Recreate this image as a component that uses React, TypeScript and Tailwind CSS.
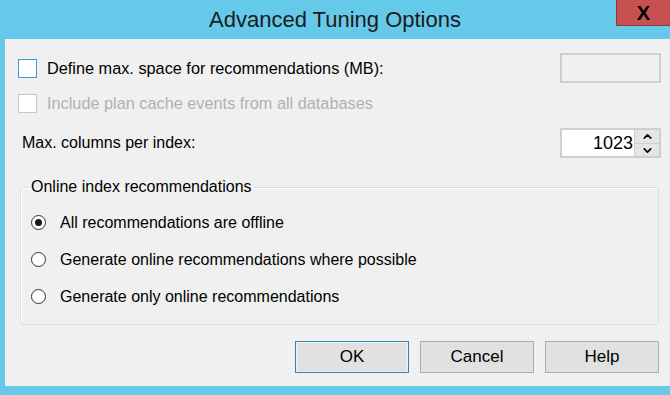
import { ChevronUp, ChevronDown } from "lucide-react";

const font = { fontFamily: '"Liberation Sans", Arial, sans-serif' };

function Checkbox({ focused, disabled }: { focused?: boolean; disabled?: boolean }) {
  return (
    <span
      className={`inline-block w-[19px] h-[19px] bg-white border ${
        focused ? "border-[#3c9ad7]" : disabled ? "border-[#c6c6c6]" : "border-[#333]"
      }`}
    />
  );
}

function Radio({ checked }: { checked?: boolean }) {
  return (
    <span className="flex items-center justify-center w-[15px] h-[15px] rounded-full border border-[#333] bg-white">
      {checked && <span className="block w-[7px] h-[7px] rounded-full bg-[#1a1a1a]" />}
    </span>
  );
}

export default function App() {
  return (
    <div className="w-[670px] h-[395px] bg-[#65c9ea] flex flex-col overflow-hidden text-[16px] text-black" style={font}>
      {/* title bar */}
      <div className="relative h-[39px] flex items-center justify-center">
        <span className="text-[22px] text-[#1b1b1b]">Advanced Tuning Options</span>
        <div className="absolute right-0 top-0 w-[54px] h-[26px] bg-[#c75050] border-l border-b border-[#8f3a3a] flex items-center justify-center">
          <span className="text-[20px] font-bold leading-none text-black">X</span>
        </div>
      </div>

      {/* client area */}
      <div className="ml-[5px] flex-1 bg-[#f0f0f0] flex flex-col pl-[13px] pr-[9px] pt-[14px]">
        <div className="h-[30px] flex items-center justify-between">
          <label className="flex items-center gap-[10px]">
            <Checkbox focused />
            <span className="text-[16.3px]">Define max. space for recommendations (MB):</span>
          </label>
          <div className="w-[101px] h-[30px] border-2 border-[#cfcfcf] bg-[#f0f0f0]" />
        </div>

        <div className="h-[30px] mt-[5px] flex items-center">
          <label className="flex items-center gap-[10px] text-[#b0b0b0]">
            <Checkbox disabled />
            <span className="text-[16.3px]">Include plan cache events from all databases</span>
          </label>
        </div>

        <div className="h-[30px] mt-[10px] flex items-center justify-between">
          <span className="pl-[4px]">Max. columns per index:</span>
          <div className="w-[101px] h-[30px] border-2 border-[#cfcfcf] bg-white flex">
            <span className="flex-1 text-right pr-[1px] leading-[26px] text-[18px]">1023</span>
            <div className="w-[25px] flex flex-col bg-[#e5e5e5] border-l border-[#cfcfcf]">
              <div className="flex-1 flex items-center justify-center border-b border-[#cfcfcf]">
                <ChevronUp size={13} strokeWidth={3} />
              </div>
              <div className="flex-1 flex items-center justify-center">
                <ChevronDown size={13} strokeWidth={3} />
              </div>
            </div>
          </div>
        </div>

        <fieldset className="mt-[21px] ml-[2px] mr-[2px] h-[146px] border border-[#d5dfe5] rounded-[3px] pl-[10px] pt-[9px] shadow-[inset_1px_1px_0_#fff]">
          <legend className="px-[2px] ml-[-2px] text-[16px] leading-[16px]">Online index recommendations</legend>
          <div className="flex flex-col">
            <label className="flex items-center gap-[14px] h-[37px]">
              <Radio checked />
              <span>All recommendations are offline</span>
            </label>
            <label className="flex items-center gap-[14px] h-[37px]">
              <Radio />
              <span>Generate online recommendations where possible</span>
            </label>
            <label className="flex items-center gap-[14px] h-[37px]">
              <Radio />
              <span>Generate only online recommendations</span>
            </label>
          </div>
        </fieldset>

        <div className="mt-[16px] mr-[2px] flex justify-end gap-[11px]">
          <button className="w-[114px] h-[32px] bg-[#e1e1e1] border border-[#3c7fb1] shadow-[inset_0_0_0_1px_#e5f1fb] text-[17px]">OK</button>
          <button className="w-[114px] h-[32px] bg-[#e1e1e1] border border-[#adadad] text-[17px]">Cancel</button>
          <button className="w-[114px] h-[32px] bg-[#e1e1e1] border border-[#adadad] text-[17px]">Help</button>
        </div>
      </div>
      <div className="h-[9px]" />
    </div>
  );
}
